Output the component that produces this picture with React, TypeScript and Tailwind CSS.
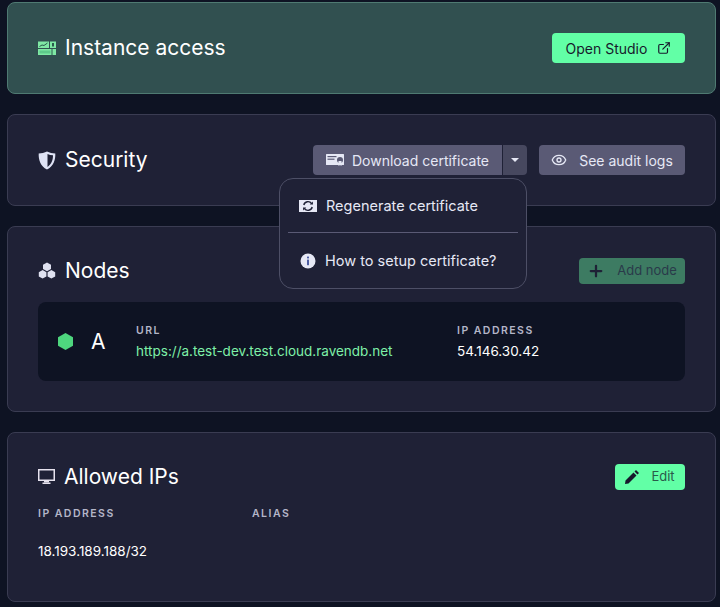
import { ExternalLink, Eye, Plus } from "lucide-react";

function InstanceIcon() {
  return (
    <svg width="18" height="14" viewBox="0 0 18 14" className="shrink-0">
      <rect x="0" y="0.5" width="11" height="6.5" fill="#7fe8a4" />
      <rect x="12" y="0.5" width="6" height="6.5" fill="#7fe8a4" />
      <path d="M1.5 5.5 L4 4 L6 4.5 L9.5 2" stroke="#2a5a4c" strokeWidth="1" fill="none" />
      <rect x="14" y="2" width="2" height="3.5" fill="#2a5a4c" />
      <rect x="0" y="8" width="18" height="6" fill="#7fe8a4" />
      <rect x="1.5" y="9.5" width="11" height="3" fill="#5ec98a" />
      <rect x="13.5" y="8" width="1" height="6" fill="#2a5a4c" />
    </svg>
  );
}

function ShieldIcon() {
  return (
    <svg width="18" height="19" viewBox="0 0 18 19" className="shrink-0">
      <path d="M9 0.5 C11.5 1.8 14.5 2.4 17.3 2.4 C17.6 9 15.5 15 9 18.6 C2.5 15 0.4 9 0.7 2.4 C3.5 2.4 6.5 1.8 9 0.5 Z" fill="#dfe3f5" />
      <path d="M9.5 3 C11.2 3.8 13 4.2 15 4.3 C15 9 13.6 13.2 9.5 15.9 Z" fill="#1f2136" />
    </svg>
  );
}

function CertIcon({ dark = "#5a5a75" }: { dark?: string }) {
  return (
    <svg width="18" height="12" viewBox="0 0 18 12" className="shrink-0">
      <rect x="0" y="0" width="18" height="11" rx="0.5" fill="#e6e8f5" />
      <rect x="1.5" y="2" width="9" height="1.2" fill={dark} />
      <rect x="1.5" y="4.6" width="7" height="1.2" fill={dark} />
      <circle cx="14" cy="6" r="3" fill={dark} />
      <path d="M12.5 7 h3 v5 l-1.5 -1 l-1.5 1 Z" fill="#e6e8f5" />
    </svg>
  );
}

function RegenIcon() {
  return (
    <svg width="18" height="12" viewBox="0 0 18 12" className="shrink-0">
      <rect x="0" y="0" width="18" height="12" fill="#e6e8f5" />
      <path d="M4.8 5 A4.3 4.3 0 0 1 12.6 3.6 M13.2 7 A4.3 4.3 0 0 1 5.4 8.4" stroke="#1f2136" strokeWidth="1.4" fill="none" />
      <path d="M10.8 4.4 L14 4.6 L13.8 1.6 Z M7.2 7.6 L4 7.4 L4.2 10.4 Z" fill="#1f2136" />
    </svg>
  );
}

function InfoIcon() {
  return (
    <svg width="16" height="16" viewBox="0 0 16 16" className="shrink-0">
      <circle cx="8" cy="8" r="7.5" fill="#e6e8f5" />
      <rect x="7.1" y="3.6" width="1.8" height="1.8" fill="#3d4f9a" />
      <rect x="7.1" y="6.6" width="1.8" height="5.6" fill="#3d4f9a" />
    </svg>
  );
}

function NodesIcon() {
  return (
    <svg width="18" height="17" viewBox="0 0 18 17" className="shrink-0">
      <path d="M9 0.5 L13 2.8 V7 L9 9.2 L5 7 V2.8 Z" fill="#dfe1f0" />
      <path d="M4.6 8 L8.4 10.2 V14.4 L4.6 16.6 L0.8 14.4 V10.2 Z" fill="#dfe1f0" />
      <path d="M13.4 8 L17.2 10.2 V14.4 L13.4 16.6 L9.6 14.4 V10.2 Z" fill="#dfe1f0" />
    </svg>
  );
}

function MonitorIcon() {
  return (
    <svg width="17" height="15" viewBox="0 0 17 15" className="shrink-0">
      <rect x="0.75" y="0.75" width="15.5" height="10.5" fill="none" stroke="#e6e2ee" strokeWidth="1.5" />
      <rect x="6" y="12" width="5" height="1.5" fill="#e6e2ee" />
      <rect x="4.5" y="13.5" width="8" height="1.5" fill="#e6e2ee" />
    </svg>
  );
}

function PencilIcon() {
  return (
    <svg width="14" height="14" viewBox="0 0 14 14" className="shrink-0">
      <path d="M0 14 L0.5 10.5 L8.5 2.5 L11.5 5.5 L3.5 13.5 Z M9.5 1.5 L11 0 L14 3 L12.5 4.5 Z" fill="#171a2c" />
    </svg>
  );
}

function Hexagon() {
  return (
    <svg width="15" height="17" viewBox="0 0 15 17" className="shrink-0">
      <path d="M7.5 0 L15 4.2 V12.8 L7.5 17 L0 12.8 V4.2 Z" fill="#4ed67e" />
    </svg>
  );
}

function Label({ children }: { children: string }) {
  return <div className="text-[10.5px] leading-[14px] font-semibold tracking-[0.14em] text-[#b4b6c8]">{children}</div>;
}

function Heading({ icon, children }: { icon: React.ReactNode; children: string }) {
  return (
    <div className="flex items-center gap-[9px]">
      {icon}
      <h2 className="text-[21px] leading-[28px] font-normal text-white">{children}</h2>
    </div>
  );
}

export default function App() {
  return (
    <div className="h-[607px] overflow-hidden bg-[#0e1323] pt-[2px] pr-[4px] pl-[7px] font-['Inter','Noto_Sans',sans-serif] text-[#e6e8f5]">
      <div className="flex flex-col gap-[20px]">
        <section className="flex h-[92px] items-center justify-between rounded-lg border border-[#4f7a72] bg-[#315050] px-[30px]">
          <Heading icon={<InstanceIcon />}>Instance access</Heading>
          <button className="flex h-[30px] w-[133px] items-center justify-center gap-[10px] rounded bg-[#62ffa6] text-[14px] text-[#171a2c]">
            Open Studio
            <ExternalLink size={14} />
          </button>
        </section>

        <section className="relative flex h-[92px] items-center justify-between rounded-lg border border-[#3a3c52] bg-[#1f2136] px-[30px]">
          <Heading icon={<ShieldIcon />}>Security</Heading>
          <div className="flex items-center gap-[12px]">
            <div className="flex h-[30px] gap-px">
              <button className="flex w-[189px] items-center justify-center gap-[8px] rounded-l bg-[#5a5a75] text-[14px]">
                <CertIcon />
                Download certificate
              </button>
              <button className="flex w-[24px] items-center justify-center rounded-r bg-[#47485f]">
                <span className="border-x-[4px] border-t-[4px] border-x-transparent border-t-[#e6e8f5]" />
              </button>
            </div>
            <button className="flex h-[30px] w-[146px] items-center justify-center gap-[12px] rounded bg-[#5a5a75] text-[14px]">
              <Eye size={16} />
              See audit logs
            </button>
          </div>

          <div className="absolute top-[63px] left-[271px] z-10 w-[248px] rounded-[14px] border border-[#4d4f66] bg-[#1f2136] px-[8px]">
            <div className="flex h-[54px] items-center gap-[9px] border-b border-[#5a5a75] px-[11px]">
              <RegenIcon />
              <span className="text-[14.5px]">Regenerate certificate</span>
            </div>
            <div className="flex h-[55px] items-center gap-[9px] px-[12px]">
              <InfoIcon />
              <span className="text-[14.5px]">How to setup certificate?</span>
            </div>
          </div>
        </section>

        <section className="rounded-lg border border-[#3a3c52] bg-[#1f2136] p-[30px]">
          <div className="flex h-[27px] items-center justify-between">
            <Heading icon={<NodesIcon />}>Nodes</Heading>
            <button className="flex h-[26px] w-[106px] items-center justify-center gap-[12px] rounded bg-[#3d7b62] text-[13px] text-[#2a3a4a]">
              <Plus size={18} strokeWidth={3} className="text-[#1f2136]" />
              Add node
            </button>
          </div>
          <div className="mt-[18px] flex h-[79px] items-center rounded-lg bg-[#0e1323] pl-[20px]">
            <Hexagon />
            <div className="ml-[18px] w-[45px] text-[21px] text-white">A</div>
            <div className="w-[321px]">
              <Label>URL</Label>
              <div className="mt-[4px] text-[13.5px] leading-[18px] text-[#7ef0a8]">https://a.test-dev.test.cloud.ravendb.net</div>
            </div>
            <div>
              <Label>IP ADDRESS</Label>
              <div className="mt-[4px] text-[13.5px] leading-[18px] text-white">54.146.30.42</div>
            </div>
          </div>
        </section>

        <section className="h-[170px] rounded-lg border border-[#3a3c52] bg-[#1f2136] p-[30px]">
          <div className="flex h-[27px] items-center justify-between">
            <Heading icon={<MonitorIcon />}>Allowed IPs</Heading>
            <button className="flex h-[26px] w-[70px] items-center justify-center gap-[12px] rounded bg-[#62ffa6] text-[13px] text-[#2a5a4a]">
              <PencilIcon />
              Edit
            </button>
          </div>
          <div className="mt-[17px] grid grid-cols-[214px_1fr]">
            <Label>IP ADDRESS</Label>
            <Label>ALIAS</Label>
          </div>
          <div className="mt-[21px] text-[13.5px] leading-[18px] text-white">18.193.189.188/32</div>
        </section>
      </div>
    </div>
  );
}
